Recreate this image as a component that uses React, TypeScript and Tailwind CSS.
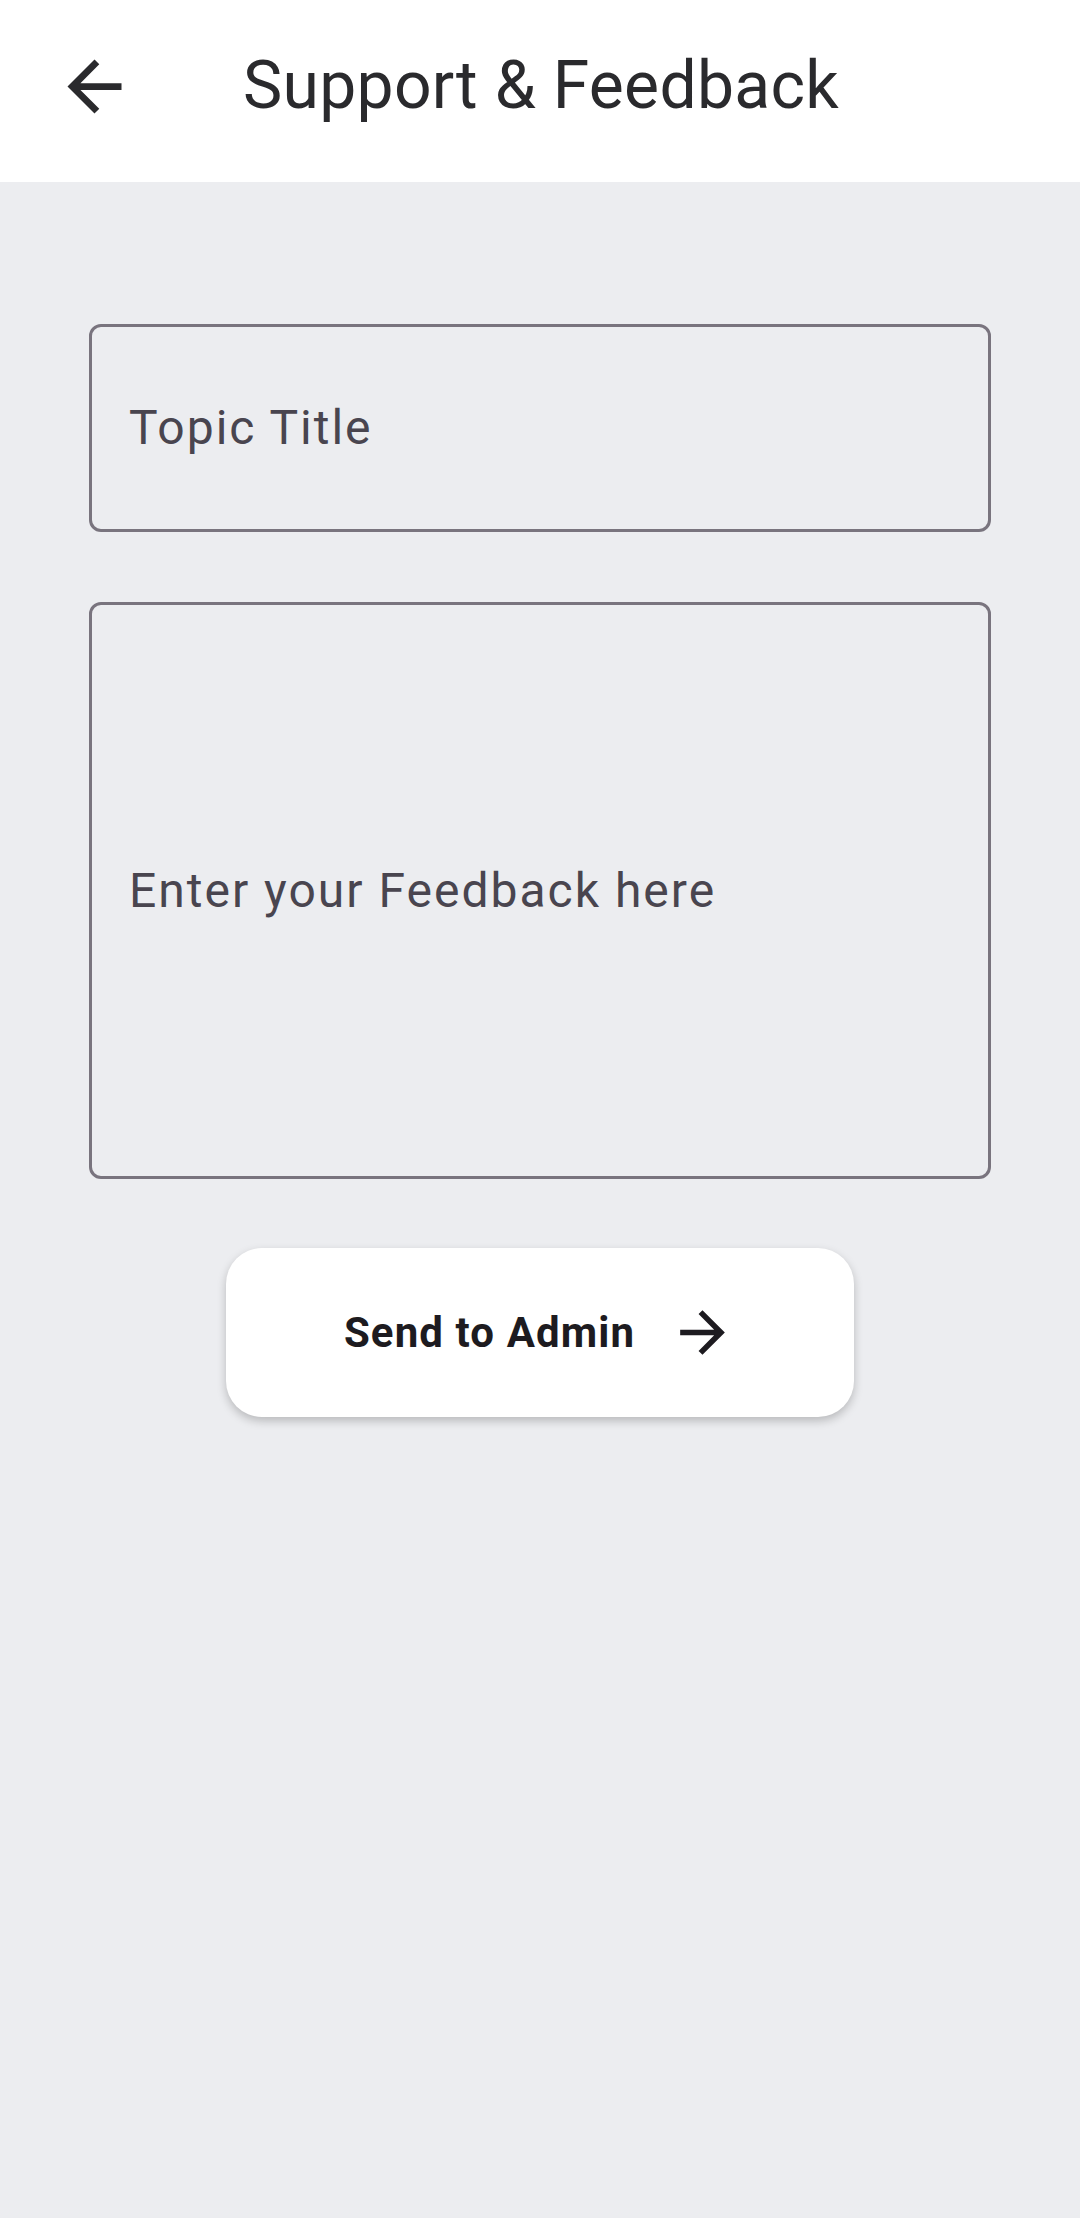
import React from 'react';

const font = { fontFamily: 'Roboto, "Noto Sans", sans-serif' };

function BackArrow() {
  return (
    <svg width="81" height="81" viewBox="0 0 24 24" fill="#2A2A2D">
      <path d="M20 11H7.83l5.59-5.59L12 4l-8 8 8 8 1.41-1.41L7.83 13H20v-2z" />
    </svg>
  );
}

function ForwardArrow() {
  return (
    <svg width="67" height="67" viewBox="0 0 24 24" fill="#1D1B20">
      <path d="M12 4l-1.41 1.41L16.17 11H4v2h12.17l-5.58 5.59L12 20l8-8z" />
    </svg>
  );
}

export default function App() {
  return (
    <div className="min-h-[2218px] w-[1080px] bg-[#ECEDF0] flex flex-col" style={font}>
      {/* App bar */}
      <header className="h-[182px] bg-white flex items-center pb-[10px] pl-[54px]">
        <BackArrow />
        <h1 className="ml-[108px] text-[66px] leading-[66px] font-normal tracking-[0.3px] text-[#2A2A2D]">
          Support &amp; Feedback
        </h1>
      </header>

      {/* Form */}
      <main className="flex flex-col px-[89px] pt-[142px]">
        <div className="h-[208px] border-[3px] border-[#79747E] rounded-[12px] flex items-center pl-[37px]">
          <span className="text-[48px] leading-[48px] tracking-[2px] text-[#49454F]">Topic Title</span>
        </div>

        <div className="mt-[70px] h-[577px] border-[3px] border-[#79747E] rounded-[12px] flex items-center pl-[37px]">
          <span className="text-[48px] leading-[48px] tracking-[2px] text-[#49454F]">
            Enter your Feedback here
          </span>
        </div>

        <button className="mt-[69px] mx-auto w-[628px] h-[169px] bg-white rounded-[36px] shadow-[0_4px_10px_rgba(0,0,0,0.22)] flex items-center justify-center gap-[34px]">
          <span className="text-[42px] leading-[42px] font-bold tracking-[1.1px] text-[#1D1B20]">Send to Admin</span>
          <ForwardArrow />
        </button>
      </main>
    </div>
  );
}
